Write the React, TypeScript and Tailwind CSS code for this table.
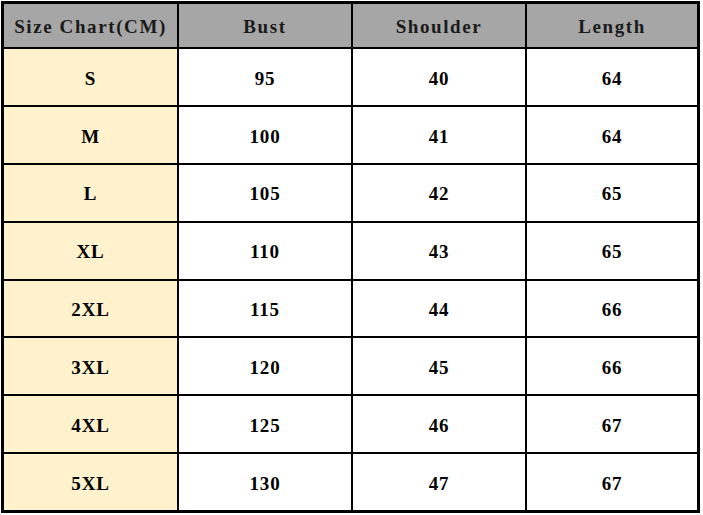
import React from 'react';

const rows = [
  ['S', '95', '40', '64'],
  ['M', '100', '41', '64'],
  ['L', '105', '42', '65'],
  ['XL', '110', '43', '65'],
  ['2XL', '115', '44', '66'],
  ['3XL', '120', '45', '66'],
  ['4XL', '125', '46', '67'],
  ['5XL', '130', '47', '67'],
];

const headers = ['Size Chart(CM)', 'Bust', 'Shoulder', 'Length'];

const App: React.FC = () => {
  return (
    <div className="w-[703px] h-[515px] bg-white pt-[1px] pl-[1px]" style={{ fontFamily: '"Liberation Serif", "Times New Roman", serif' }}>
      <div className="w-[699px] h-[512px] border-[3px] border-black bg-black grid grid-cols-[173px_172px_172px_170px] grid-rows-[43px_repeat(8,1fr)] gap-[2px]">
        {headers.map((h) => (
          <div
            key={h}
            className="bg-[#a6a6a6] flex items-center justify-center text-[19px] font-bold text-[#1a1a1a] tracking-[1.6px] pt-[4px]"
          >
            {h}
          </div>
        ))}
        {rows.map((r) =>
          r.map((cell, i) => (
            <div
              key={r[0] + i}
              className={`${i === 0 ? 'bg-[#fff2cc]' : 'bg-white'} flex items-center justify-center text-[19px] font-bold text-black tracking-[0.8px] pt-[4px]`}
            >
              {cell}
            </div>
          ))
        )}
      </div>
    </div>
  );
};

export default App;
